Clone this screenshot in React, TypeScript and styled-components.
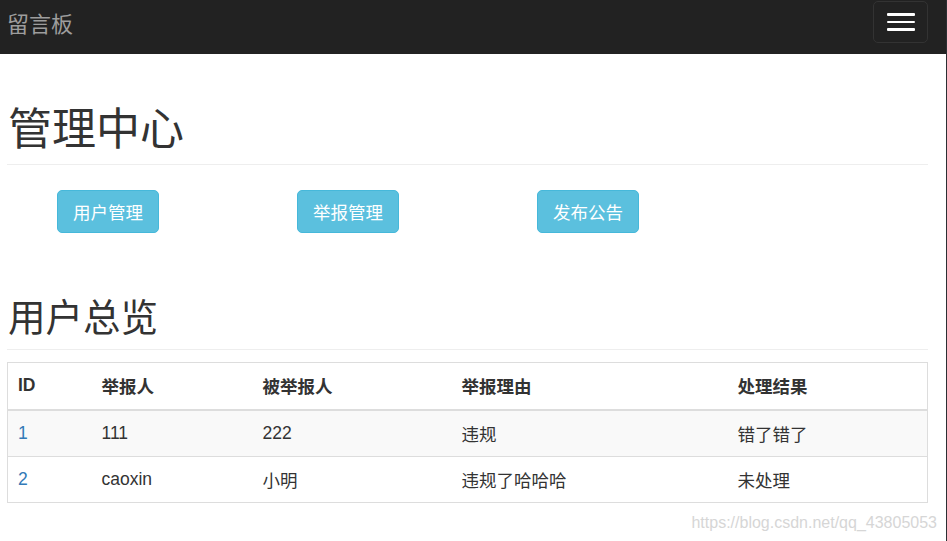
import styled, { createGlobalStyle } from "styled-components";

const GlobalStyle = createGlobalStyle`
  html, body {
    margin: 0;
    padding: 0;
    background: #fff;
  }
  body {
    font-family: "Liberation Sans", Arial, "Noto Sans CJK SC", sans-serif;
    font-size: 17.5px;
    color: #333;
  }
  * {
    box-sizing: border-box;
  }
`;

const Frame = styled.div`
  position: relative;
  width: 947px;
  height: 541px;
  border-right: 1px solid #2b2f33;
  overflow: hidden;
`;

const Navbar = styled.nav`
  height: 54px;
  background: #222;
  display: flex;
  align-items: flex-start;
  justify-content: space-between;
  padding: 0 18px 0 7px;
`;

const Brand = styled.a`
  font-size: 22px;
  line-height: 44px;
  color: #9d9d9d;
  font-family: "Noto Sans CJK SC", sans-serif;
  text-decoration: none;
`;

const Toggle = styled.button`
  margin-top: 1px;
  width: 55px;
  height: 42px;
  border: 1px solid #333;
  border-radius: 5px;
  background: transparent;
  display: flex;
  flex-direction: column;
  align-items: center;
  justify-content: center;
  gap: 5px;
  padding: 0;
`;

const Bar = styled.span`
  display: block;
  width: 28px;
  height: 2.5px;
  background: #fff;
  border-radius: 1px;
`;

const Container = styled.main`
  padding: 0 18px 0 7px;
`;

const PageHeader = styled.div<{ $top: number; $pad: number }>`
  margin-top: ${(p) => p.$top}px;
  padding-bottom: ${(p) => p.$pad}px;
  border-bottom: 1px solid #eee;
`;

const Title = styled.h1<{ $size: number }>`
  margin: 0;
  padding-left: 1px;
  font-size: ${(p) => p.$size}px;
  line-height: 1.1;
  font-weight: 400;
  font-family: "Noto Sans CJK SC", sans-serif;
  color: #333;
`;

const ButtonRow = styled.div`
  display: grid;
  grid-template-columns: repeat(3, 240px);
  padding-left: 50px;
  margin-top: 25px;
`;

const InfoButton = styled.button`
  justify-self: start;
  height: 43px;
  padding: 0 15px;
  font-size: 17.5px;
  font-family: "Noto Sans CJK SC", sans-serif;
  color: #fff;
  background: #5bc0de;
  border: 1px solid #46b8da;
  border-radius: 5px;
`;

const Table = styled.table`
  margin-top: 12px;
  width: 920px;
  border-collapse: collapse;
  border: 1px solid #ddd;
  table-layout: fixed;
`;

const Th = styled.th<{ $w: number }>`
  width: ${(p) => p.$w}px;
  height: 48px;
  padding: 0 10px;
  text-align: left;
  font-weight: 700;
  font-family: "Liberation Sans", Arial, "Noto Sans CJK SC", sans-serif;
  border-bottom: 2px solid #ddd;
  vertical-align: middle;
`;

const Row = styled.tr<{ $striped?: boolean }>`
  background: ${(p) => (p.$striped ? "#f9f9f9" : "#fff")};
  border-top: 1px solid #ddd;
`;

const Td = styled.td`
  height: 46px;
  padding: 0 10px;
  vertical-align: middle;
`;

const Link = styled.a`
  color: #337ab7;
  text-decoration: none;
`;

const Watermark = styled.span`
  position: absolute;
  right: 9px;
  bottom: 9px;
  font-size: 16px;
  color: #d6d6d6;
  font-family: "Liberation Sans", Arial, sans-serif;
`;

const columns = [
  { label: "ID", w: 84 },
  { label: "举报人", w: 161 },
  { label: "被举报人", w: 199 },
  { label: "举报理由", w: 276 },
  { label: "处理结果", w: 200 },
];

const reports = [
  { id: 1, from: "111", to: "222", reason: "违规", result: "错了错了" },
  { id: 2, from: "caoxin", to: "小明", reason: "违规了哈哈哈", result: "未处理" },
];

export default function App() {
  return (
    <Frame>
      <GlobalStyle />
      <Navbar>
        <Brand href="#">留言板</Brand>
        <Toggle aria-label="menu">
          <Bar />
          <Bar />
          <Bar />
        </Toggle>
      </Navbar>
      <Container>
        <PageHeader $top={48} $pad={14}>
          <Title $size={44}>管理中心</Title>
        </PageHeader>
        <ButtonRow>
          <InfoButton>用户管理</InfoButton>
          <InfoButton>举报管理</InfoButton>
          <InfoButton>发布公告</InfoButton>
        </ButtonRow>
        <PageHeader $top={61} $pad={13}>
          <Title as="h2" $size={37.5}>用户总览</Title>
        </PageHeader>
        <Table>
          <thead>
            <tr>
              {columns.map((c) => (
                <Th key={c.label} $w={c.w}>{c.label}</Th>
              ))}
            </tr>
          </thead>
          <tbody>
            {reports.map((r, i) => (
              <Row key={r.id} $striped={i % 2 === 0}>
                <Td><Link href="#">{r.id}</Link></Td>
                <Td>{r.from}</Td>
                <Td>{r.to}</Td>
                <Td>{r.reason}</Td>
                <Td>{r.result}</Td>
              </Row>
            ))}
          </tbody>
        </Table>
      </Container>
      <Watermark>https://blog.csdn.net/qq_43805053</Watermark>
    </Frame>
  );
}
